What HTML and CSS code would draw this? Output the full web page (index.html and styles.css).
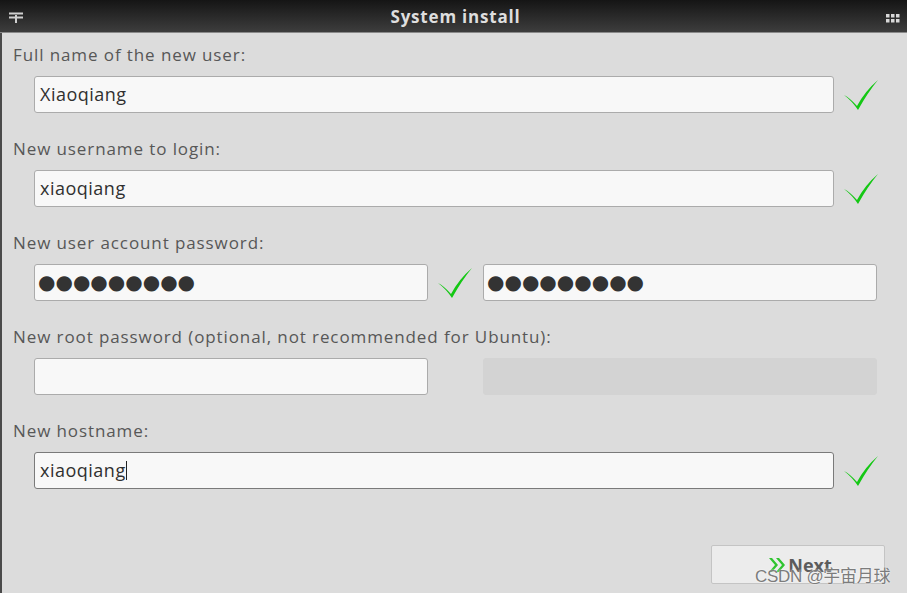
FILE: index.html
```html
<!DOCTYPE html>
<html>
<head>
<meta charset="utf-8">
<link rel="stylesheet" href="styles.css">
</head>
<body>
<div class="window">
  <header class="titlebar">
    <svg class="tb-icon" width="14" height="12" viewBox="0 0 14 12"><path d="M0 1.5H14M0 5.5H14M7 3V11" stroke="#cfcfcf" stroke-width="2" fill="none"/></svg>
    <span class="title">System install</span>
    <svg class="tb-icon" width="14" height="9" viewBox="0 0 14 9"><g fill="#d8d8d8"><rect x="0" y="0" width="3.5" height="3.5"/><rect x="5" y="0" width="3.5" height="3.5"/><rect x="10" y="0" width="3.5" height="3.5"/><rect x="0" y="5" width="3.5" height="3.5"/><rect x="5" y="5" width="3.5" height="3.5"/><rect x="10" y="5" width="3.5" height="3.5"/></g></svg>
  </header>
  <main class="content">
    <section class="field">
      <div class="label">Full name of the new user:</div>
      <div class="row">
        <div class="input wide">Xiaoqiang</div>
        <svg class="check" viewBox="0 0 36 32"><path d="M1 16 Q7 19 14 27 Q22 12 35 1 Q25 13 15 31 Q9 22 1 16Z" fill="#14c814"/></svg>
      </div>
    </section>
    <section class="field">
      <div class="label">New username to login:</div>
      <div class="row">
        <div class="input wide">xiaoqiang</div>
        <svg class="check" viewBox="0 0 36 32"><path d="M1 16 Q7 19 14 27 Q22 12 35 1 Q25 13 15 31 Q9 22 1 16Z" fill="#14c814"/></svg>
      </div>
    </section>
    <section class="field">
      <div class="label">New user account password:</div>
      <div class="row">
        <div class="input half dots">●●●●●●●●●</div>
        <svg class="check" viewBox="0 0 36 32"><path d="M1 16 Q7 19 14 27 Q22 12 35 1 Q25 13 15 31 Q9 22 1 16Z" fill="#14c814"/></svg>
        <div class="input half dots">●●●●●●●●●</div>
      </div>
    </section>
    <section class="field">
      <div class="label">New root password (optional, not recommended for Ubuntu):</div>
      <div class="row">
        <div class="input half"></div>
        <div class="check-space"></div>
        <div class="input half disabled"></div>
      </div>
    </section>
    <section class="field">
      <div class="label">New hostname:</div>
      <div class="row">
        <div class="input wide focused">xiaoqiang<span class="caret"></span></div>
        <svg class="check" viewBox="0 0 36 32"><path d="M1 16 Q7 19 14 27 Q22 12 35 1 Q25 13 15 31 Q9 22 1 16Z" fill="#14c814"/></svg>
      </div>
    </section>
    <footer class="footer">
      <button class="next">
        <svg width="18" height="16" viewBox="0 0 18 16"><path d="M1 1 L7 8 L1 15 L4 15 L10 8 L4 1Z M8 1 L14 8 L8 15 L11 15 L17 8 L11 1Z" fill="#2fc42f"/></svg>
        <span>Next</span>
      </button>
    </footer>
  </main>
  <div class="watermark">CSDN @宇宙月球</div>
</div>
</body>
</html>
```
FILE: styles.css
```css
html, body {
  margin: 0;
  padding: 0;
  width: 907px;
  height: 593px;
  overflow: hidden;
  background: #dcdcdc;
}
.window {
  position: relative;
  width: 907px;
  height: 593px;
  display: flex;
  flex-direction: column;
  font-family: "Open Sans", "Noto Sans", sans-serif;
}
.titlebar {
  height: 32px;
  flex: none;
  display: flex;
  align-items: center;
  justify-content: space-between;
  padding: 0 7px 0 9px;
  background: linear-gradient(#151515, #3d3d3d);
  border-bottom: 1px solid #8a8a8a;
}
.tb-icon { display: block; margin-top: 4px; }
.title {
  color: #dedede;
  font-weight: 700;
  font-size: 17px;
  letter-spacing: 0.8px;
  margin-left: 2px;
}
.content {
  flex: 1;
  display: flex;
  flex-direction: column;
  padding: 11px 0 0 13px;
  border-left: 2px solid #4a4a4a;
}
.field {
  height: 94px;
  flex: none;
}
.label {
  color: #575757;
  font-size: 17px;
  letter-spacing: 0.9px;
  line-height: 22px;
  margin-left: -2px;
}
.row {
  display: flex;
  align-items: center;
  margin-top: 10px;
  margin-left: 19px;
}
.input {
  box-sizing: border-box;
  height: 37px;
  background: #f8f8f8;
  border: 1px solid #ababab;
  border-radius: 3px;
  color: #303030;
  font-size: 18px;
  letter-spacing: 0.5px;
  line-height: 35px;
  padding-left: 5px;
}
.wide { width: 800px; }
.half { width: 394px; }
.check {
  width: 36px;
  height: 32px;
  margin: 0 10px 0 9px;
  flex: none;
}
.check-space { width: 55px; flex: none; }
.dots {
  font-family: "DejaVu Sans", sans-serif;
  font-size: 20px;
  letter-spacing: 0;
  color: #333;
  padding-left: 3px;
}
.disabled {
  background: #d3d3d3;
  border-color: #d3d3d3;
}
.focused { border-color: #7a7a7a; }
.caret {
  display: inline-block;
  width: 1px;
  height: 19px;
  background: #222;
  vertical-align: -3px;
}
.footer {
  display: flex;
  justify-content: flex-end;
  padding-right: 22px;
  margin-top: 31px;
}
.next {
  box-sizing: border-box;
  width: 174px;
  height: 39px;
  background: #ececec;
  border: 1px solid #c4c4c4;
  border-radius: 2px;
  display: flex;
  align-items: center;
  justify-content: center;
  gap: 2px;
  padding: 0 0 0 4px;
  font-family: "Open Sans", sans-serif;
  font-size: 18px;
  font-weight: 700;
  color: #5c5c5c;
}
.watermark {
  position: absolute;
  left: 755px;
  top: 562px;
  font-family: "Liberation Sans", "Noto Sans CJK SC", sans-serif;
  font-size: 17px;
  color: #7c7c7c;
  text-shadow: 0 0 2px #fff;
  letter-spacing: -0.3px;
}
```
